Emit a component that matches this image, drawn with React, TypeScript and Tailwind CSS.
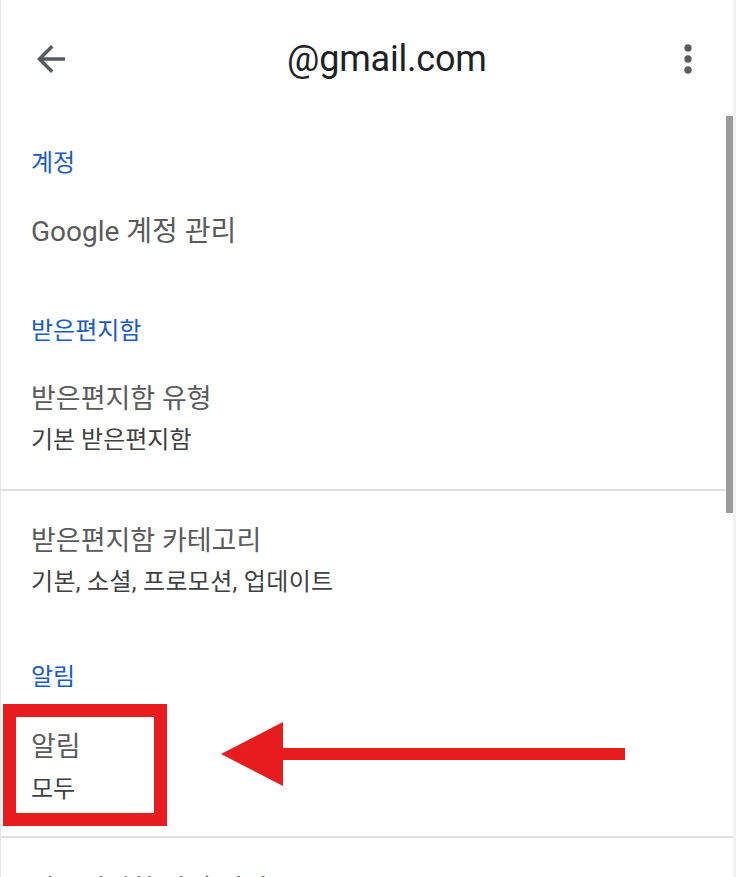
import React from "react";

const KR = { fontFamily: 'Roboto, "Noto Sans CJK KR", sans-serif' };

export default function App() {
  return (
    <div
      className="relative w-[736px] h-[877px] overflow-hidden bg-white border-l border-[#e6e6e6]"
      style={KR}
    >
      {/* right edge strip */}
      <div className="absolute right-0 top-0 h-full w-[3px] bg-[#f2f2f2]" />
      {/* scrollbar */}
      <div className="absolute left-[725px] top-[116px] w-[7px] h-[397px] bg-[#9b9b9b]" />

      {/* header */}
      <div className="h-[120px] flex items-center relative">
        <div className="ml-[29px] w-[42px] h-[42px] mt-[-2px]">
          <svg viewBox="0 0 24 24" width="42" height="42" fill="#555a5e">
            <path d="M20 11H7.83l5.59-5.59L12 4l-8 8 8 8 1.41-1.41L7.83 13H20v-2z" />
          </svg>
        </div>
        <div className="ml-[215px] text-[36px] leading-[40px] text-[#202124] mt-[-2px] tracking-[-0.2px]">
          @gmail.com
        </div>
        <div className="ml-auto mr-[26px] w-[44px] h-[44px] mt-[-2px]">
          <svg viewBox="0 0 24 24" width="44" height="44" fill="#5a5e62">
            <circle cx="12" cy="6" r="2" />
            <circle cx="12" cy="12" r="2" />
            <circle cx="12" cy="18" r="2" />
          </svg>
        </div>
      </div>

      <div className="pl-[30px]">
        <div className="mt-[28px] text-[24px] leading-[30px] text-[#1a5bc6]">계정</div>
        <div className="mt-[37px] text-[28px] leading-[34px] text-[#5b5b5b]">Google 계정 관리</div>

        <div className="mt-[67px] text-[24px] leading-[30px] text-[#1a5bc6]">받은편지함</div>
        <div className="mt-[36px] text-[27px] leading-[34px] text-[#5b5b5b]">받은편지함 유형</div>
        <div className="mt-[9px] text-[24px] leading-[30px] text-[#404040]">기본 받은편지함</div>
      </div>

      <div className="mt-[34px] mr-[3px] h-[2px] bg-[#e0e0e0]" />

      <div className="pl-[30px]">
        <div className="mt-[33px] text-[27px] leading-[34px] text-[#5b5b5b]">받은편지함 카테고리</div>
        <div className="mt-[9px] text-[24px] leading-[30px] text-[#404040] tracking-[0.3px]">기본, 소셜, 프로모션, 업데이트</div>

        <div className="mt-[65px] text-[24px] leading-[30px] text-[#1a5bc6]">알림</div>
        <div className="mt-[38px] text-[27px] leading-[34px] text-[#5b5b5b]">알림</div>
        <div className="mt-[10px] text-[24px] leading-[30px] text-[#404040]">모두</div>
      </div>

      <div className="mt-[32px] mr-[3px] h-[2px] bg-[#e0e0e0]" />

      <div className="pl-[30px]">
        <div className="mt-[35px] text-[27px] leading-[34px] text-[#5b5b5b]">받은편지함 알림 설정</div>
      </div>

      {/* annotation overlay: red box + arrow */}
      <div className="absolute left-[2px] top-[704px] w-[164px] h-[122px] border-[13px] border-[#e61c1e]" />
      <svg
        className="absolute left-0 top-0"
        width="736"
        height="877"
        viewBox="0 0 736 877"
      >
        <polygon points="220,754 282,722 282,786" fill="#e61c1e" />
        <rect x="281" y="748" width="343" height="12" fill="#e61c1e" />
      </svg>
    </div>
  );
}
